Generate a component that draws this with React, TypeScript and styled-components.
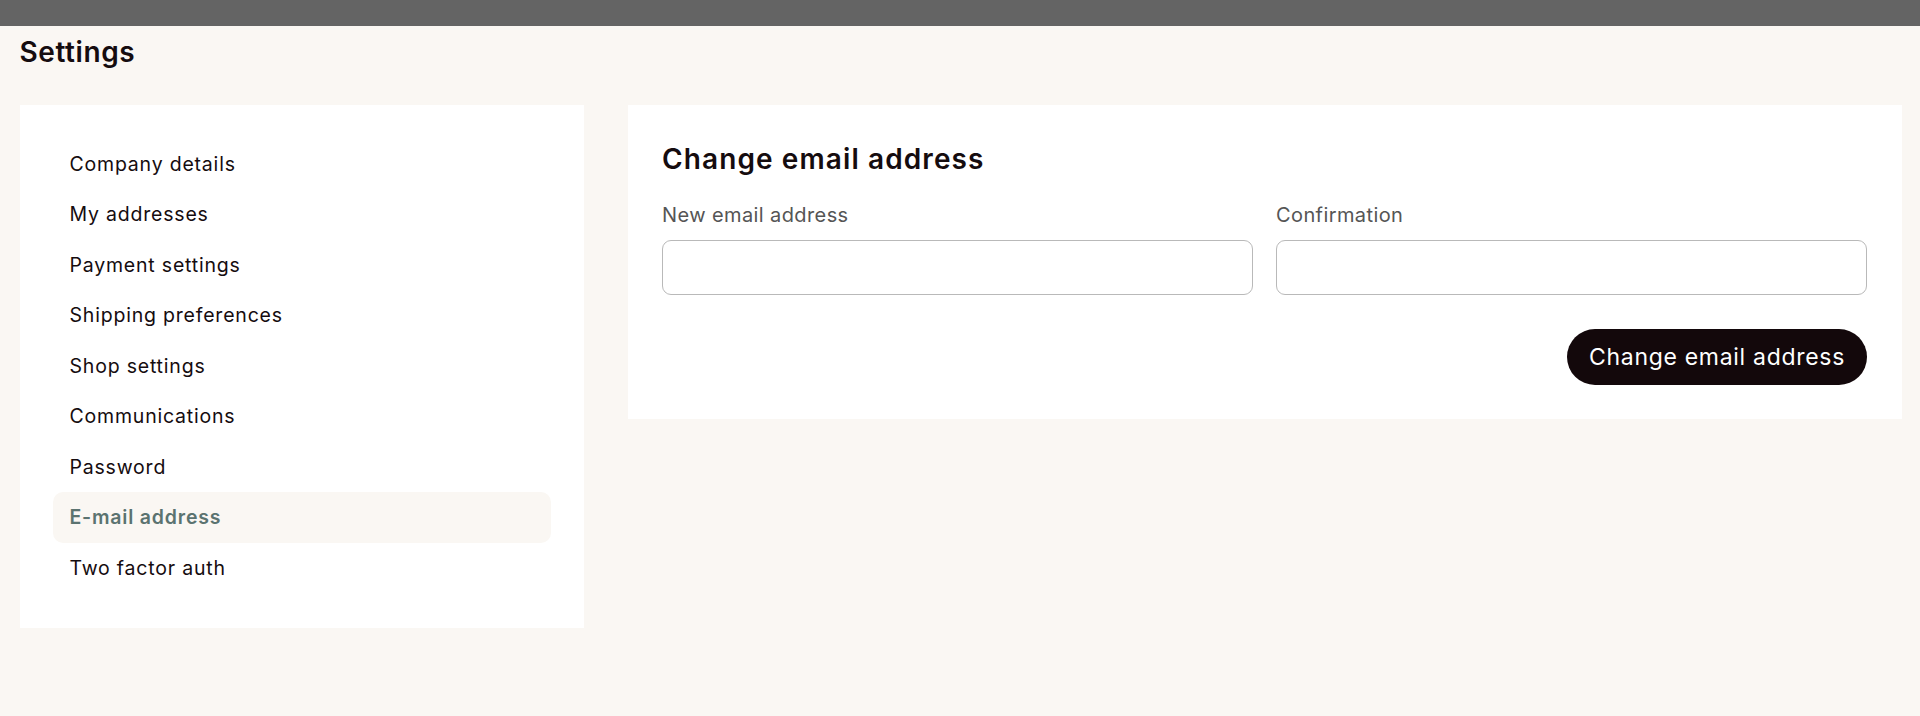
import styled, { createGlobalStyle } from "styled-components";

const GlobalStyle = createGlobalStyle`
  * {
    box-sizing: border-box;
  }

  body {
    margin: 0;
    background: #faf7f3;
    font-family: Inter, "Noto Sans", sans-serif;
    color: #150c0f;
  }
`;

const menu = [
  "Company details",
  "My addresses",
  "Payment settings",
  "Shipping preferences",
  "Shop settings",
  "Communications",
  "Password",
  "E-mail address",
  "Two factor auth",
];

export default function App() {
  return (
    <>
      <GlobalStyle />
      <TopBar />
      <Page>
        <PageTitle>Settings</PageTitle>
        <Layout>
          <Sidebar>
            {menu.map((label) => (
              <MenuItem key={label} $active={label === "E-mail address"}>
                {label}
              </MenuItem>
            ))}
          </Sidebar>
          <Card>
            <CardTitle>Change email address</CardTitle>
            <Fields>
              <Field>
                <Label htmlFor="new-email">New email address</Label>
                <Input id="new-email" type="email" />
              </Field>
              <Field>
                <Label htmlFor="confirm-email">Confirmation</Label>
                <Input id="confirm-email" type="email" />
              </Field>
            </Fields>
            <Actions>
              <Button type="button">Change email address</Button>
            </Actions>
          </Card>
        </Layout>
      </Page>
    </>
  );
}

const TopBar = styled.div`
  height: 26px;
  background: #646464;
`;

const Page = styled.div`
  padding: 0 18px 0 19.5px;
`;

const PageTitle = styled.h1`
  margin: 0;
  padding-top: 8px;
  height: 79px;
  font-size: 28px;
  line-height: 36px;
  font-weight: 600;
  letter-spacing: 0.6px;
`;

const Layout = styled.div`
  display: grid;
  grid-template-columns: 564px 1fr;
  gap: 44.5px;
  align-items: start;
`;

const Sidebar = styled.nav`
  background: #fff;
  padding: 33.5px 33px 35px;
  display: flex;
  flex-direction: column;
`;

const MenuItem = styled.a<{ $active?: boolean }>`
  display: flex;
  align-items: center;
  height: 50.5px;
  padding: 0 17px;
  border-radius: 10px;
  font-size: 19.5px;
  letter-spacing: 0.8px;
  text-decoration: none;
  cursor: pointer;
  color: ${({ $active }) => ($active ? "#5b7370" : "#150c0f")};
  font-weight: ${({ $active }) => ($active ? 600 : 400)};
  background: ${({ $active }) => ($active ? "#faf7f3" : "transparent")};
`;

const Card = styled.section`
  background: #fff;
  padding: 36px 35px 34px 34px;
`;

const CardTitle = styled.h2`
  margin: 0 0 24px;
  font-size: 28px;
  line-height: 36px;
  font-weight: 600;
  letter-spacing: 1.1px;
`;

const Fields = styled.div`
  display: grid;
  grid-template-columns: 1fr 1fr;
  gap: 23px;
`;

const Field = styled.div`
  display: flex;
  flex-direction: column;
`;

const Label = styled.label`
  font-size: 20px;
  line-height: 28px;
  letter-spacing: 0.4px;
  color: #555;
  margin-bottom: 11px;
`;

const Input = styled.input`
  height: 55px;
  border: 1.5px solid #b9b9b9;
  border-radius: 9px;
  background: #fff;
  font: inherit;
  padding: 0 16px;
  outline: none;
`;

const Actions = styled.div`
  display: flex;
  justify-content: flex-end;
  margin-top: 34px;
`;

const Button = styled.button`
  height: 56px;
  padding: 0 22px;
  border: none;
  border-radius: 28px;
  background: #13080b;
  color: #fff;
  font-family: inherit;
  font-size: 23px;
  letter-spacing: 0.7px;
  cursor: pointer;
`;
